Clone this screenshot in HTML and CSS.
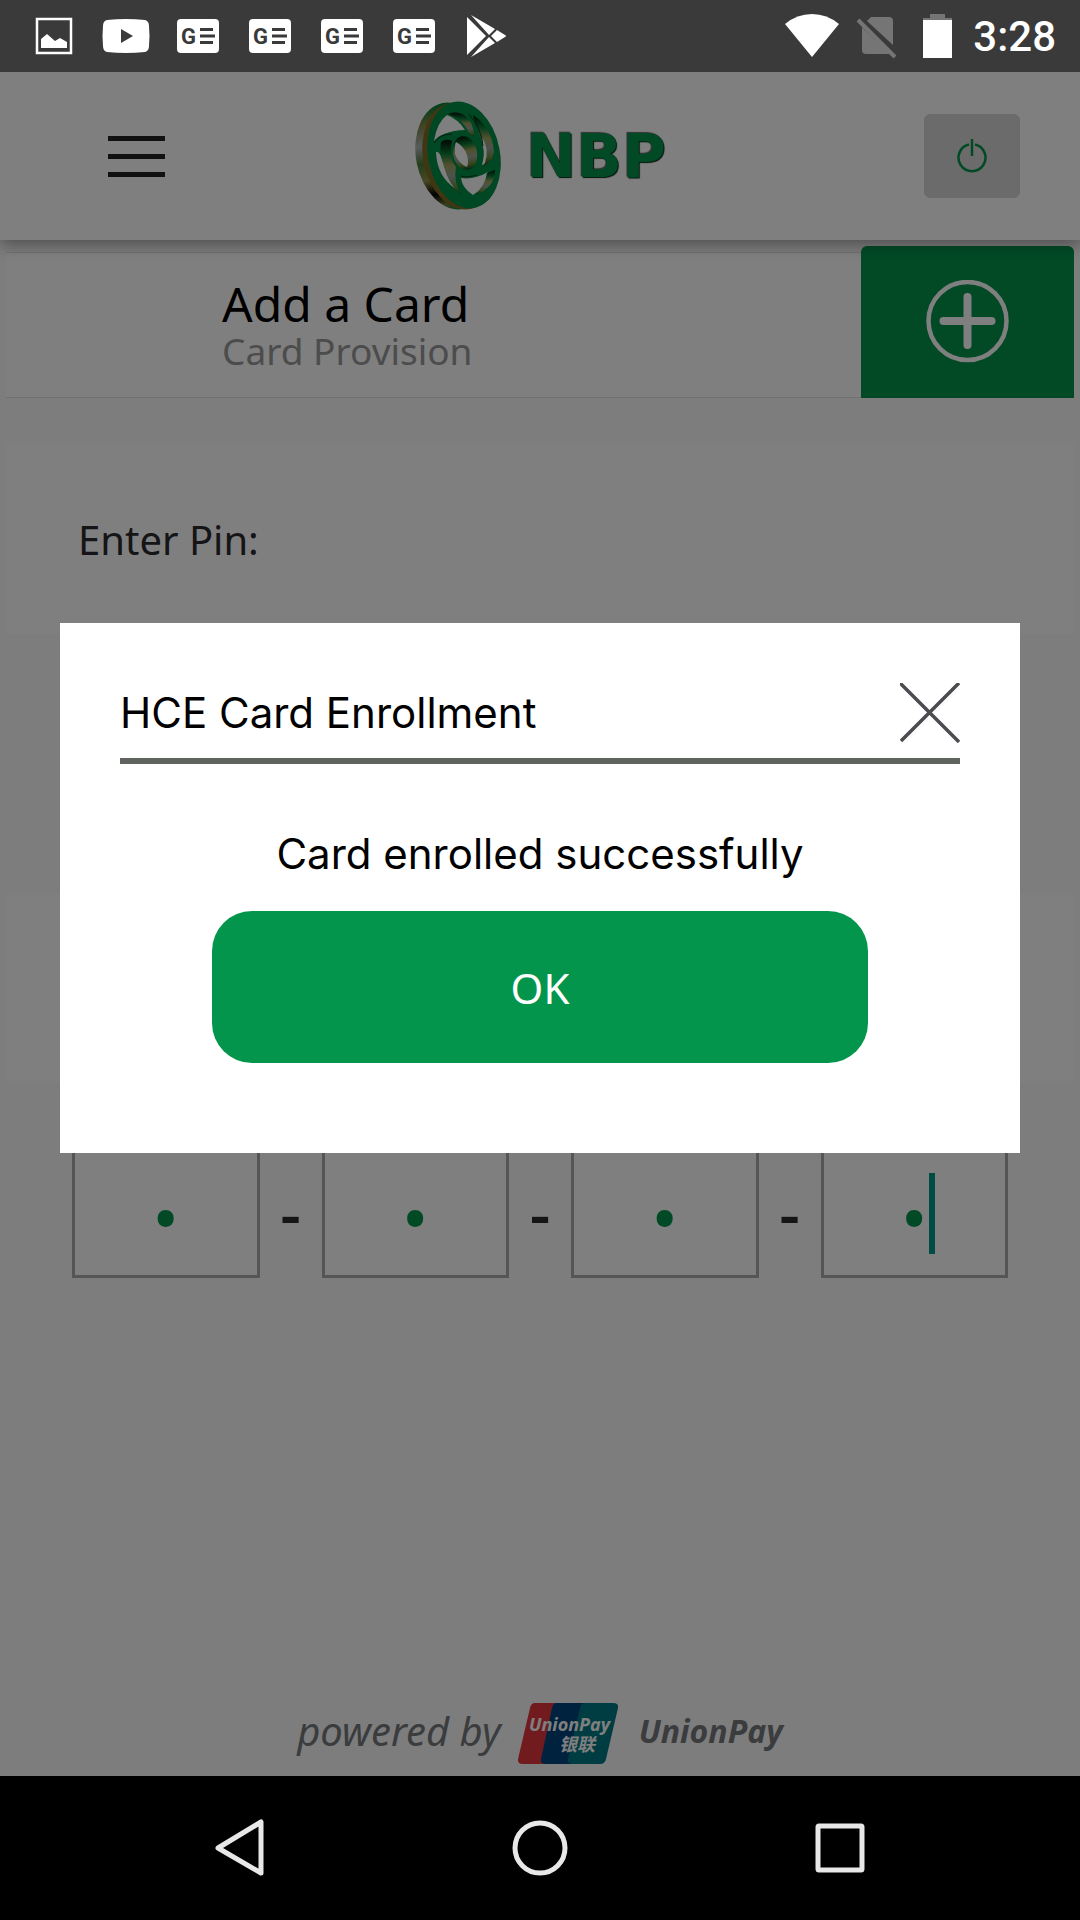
FILE: index.html
```html
<!DOCTYPE html>
<html lang="en">
<head>
  <meta charset="UTF-8">
  <meta name="viewport" content="width=device-width, initial-scale=1.0">
  <title>NBP - Add a Card</title>
  <link rel="stylesheet" href="styles.css">
</head>
<body>
  <div class="screen">
    <div class="statusbar">
      <div class="status-icons">
        <svg width="48" height="48" viewBox="0 0 48 48">
          <path d="M7 7h34v34H7z" fill="none" stroke="#fff" stroke-width="2.5"/>
          <path d="M11 36v-9l6-5 8 7 5-3 7 4v6z" fill="#fff"/>
        </svg>
        <svg width="48" height="48" viewBox="0 0 48 48">
          <path d="M5 8q19-2 38 0 4 1 4 6 1 10 0 20 0 5-4 6-19 2-38 0-4-1-4-6-1-10 0-20 0-5 4-6z" fill="#fff"/>
          <path d="M19 17v14l12-7z" fill="#3a3a3a"/>
        </svg>
        <svg class="news" width="48" height="48" viewBox="0 0 48 48">
          <rect x="3" y="7" width="42" height="34" rx="4" fill="#fff"/>
          <text x="7" y="32">G</text>
          <path d="M26 17.500h13M26 24h15M26 30.500h13" stroke="#3a3a3a" stroke-width="3"/>
        </svg>
        <svg class="news" width="48" height="48" viewBox="0 0 48 48">
          <rect x="3" y="7" width="42" height="34" rx="4" fill="#fff"/>
          <text x="7" y="32">G</text>
          <path d="M26 17.500h13M26 24h15M26 30.500h13" stroke="#3a3a3a" stroke-width="3"/>
        </svg>
        <svg class="news" width="48" height="48" viewBox="0 0 48 48">
          <rect x="3" y="7" width="42" height="34" rx="4" fill="#fff"/>
          <text x="7" y="32">G</text>
          <path d="M26 17.500h13M26 24h15M26 30.500h13" stroke="#3a3a3a" stroke-width="3"/>
        </svg>
        <svg class="news" width="48" height="48" viewBox="0 0 48 48">
          <rect x="3" y="7" width="42" height="34" rx="4" fill="#fff"/>
          <text x="7" y="32">G</text>
          <path d="M26 17.500h13M26 24h15M26 30.500h13" stroke="#3a3a3a" stroke-width="3"/>
        </svg>
        <svg width="48" height="48" viewBox="0 0 48 48">
          <path d="M5 5l19 19L5 43zM9 3l24 14-6 6zM9 45l24-14-6-6zM35 18l8 5q2 1 0 2l-8 5-6-6z" fill="#fff"/>
        </svg>
      </div>
      <div class="status-right">
        <svg width="54" height="48" viewBox="0 0 54 48">
          <path d="M27 45L0 12Q12 2 27 2t27 10z" fill="#fff"/>
        </svg>
        <svg width="48" height="48" viewBox="0 0 48 48">
          <path d="M16 9l4-4h18q4 0 4 4v24zM11 15l28 27H15q-4 0-4-4z" fill="#757575"/>
          <path d="M7 8l37 37" stroke="#757575" stroke-width="4"/>
        </svg>
        <svg width="48" height="48" viewBox="0 0 48 48">
          <path d="M19 2h15v4h7v3H12V6h7z" fill="#757575"/>
          <path d="M12 8h29v38H12z" fill="#fff"/>
        </svg>
        <span class="time">3:28</span>
      </div>
    </div>

    <header class="header">
      <button class="menu-btn" aria-label="Menu"><span></span><span></span><span></span></button>
      <div class="logo">
        <svg width="90" height="112" viewBox="0 0 90 112">
          <defs>
            <linearGradient id="rim" x1="0" y1="0" x2="0" y2="1">
              <stop offset="0" stop-color="#00803c"/>
              <stop offset=".16" stop-color="#808440"/>
              <stop offset=".36" stop-color="#b0b4ba"/>
              <stop offset=".52" stop-color="#4a7c34"/>
              <stop offset=".68" stop-color="#90904a"/>
              <stop offset=".82" stop-color="#000"/>
              <stop offset=".93" stop-color="#70803c"/>
              <stop offset="1" stop-color="#00803c"/>
            </linearGradient>
            <linearGradient id="gold" x1="0" y1="0" x2="0" y2="1">
              <stop offset="0" stop-color="#06110a"/>
              <stop offset=".25" stop-color="#0b7a35"/>
              <stop offset=".45" stop-color="#a2a25e"/>
              <stop offset=".65" stop-color="#9aa59a"/>
              <stop offset=".85" stop-color="#6a8a3a"/>
              <stop offset="1" stop-color="#0a4a20"/>
            </linearGradient>
          </defs>
          <ellipse cx="39" cy="56" rx="37" ry="54" transform="rotate(-11 39 56)" fill="url(#rim)"/>
          <ellipse cx="46" cy="56" rx="37" ry="54" transform="rotate(-11 46 56)" fill="#806f24"/>
          <ellipse cx="50" cy="55" rx="36" ry="54" transform="rotate(-11 50 55)" fill="#009048"/>
          <g fill="#fff">
            <path d="M20 41Q23 22 33 15 44 19 51 30 40 30 30 34 24 36 20 41z"/>
            <path d="M22 52Q26 50 30 66 34 80 42 89 23 77 22 52z"/>
            <path d="M47 78Q60 80 74 72 72 87 59 95 48 88 47 78z"/>
          </g>
          <g fill="url(#gold)">
            <path d="M34 14Q47 9 56 21 60 28 60 37L55 33Q48 18 34 14z"/>
            <path d="M27 42Q33 38 38 41 34 57 42 67 39 82 48 96 34 84 30 66 25 54 27 42z"/>
            <path d="M73 73L81 70Q81 88 61 95 71 86 73 73z"/>
            <path d="M59 15Q78 27 80 52 78 63 69 66 73 52 69 42 62 28 59 15z"/>
            <ellipse cx="51" cy="53" rx="12" ry="17" transform="rotate(-11 51 53)"/>
          </g>
          <path d="M42 42Q50 46 53 55 55 62 53 67 44 63 41 54 40 46 42 42zM67 36q9 12 4 27-1 2-3 2 3-12 1-18z" fill="#fff"/>
          <path d="M55 14Q68 30 69 46M20 43q6-9 18-9M47 76q6 2 16-1" fill="none" stroke="#003a1a" stroke-width="1"/>
        </svg>
        <span class="logo-text">NBP</span>
      </div>
      <button class="power-btn" aria-label="Log out">
        <svg width="32" height="36" viewBox="0 0 32 36">
          <path d="M13 6.500a13.500 13.500 0 1 0 6 0M16 1v17" fill="none" stroke="#04954c" stroke-width="2.500"/>
        </svg>
      </button>
    </header>

    <main class="content">
      <section class="card-row">
        <div class="card-info">
          <h1>Add a Card</h1>
          <p>Card Provision</p>
        </div>
        <button class="add-btn" aria-label="Add">
          <svg width="84" height="84" viewBox="0 0 84 84" fill="none" stroke="#fff">
            <circle cx="41.500" cy="41" r="39" stroke-width="4.500"/>
            <path d="M17.500 41h48M41.500 17v48" stroke-width="8" stroke-linecap="round"/>
          </svg>
        </button>
      </section>

      <div class="panel">Enter Pin:</div>
      <div class="pins">
        <div class="pin"><input type="password" maxlength="1" aria-label="Pin digit 1"></div>
        <div class="pin"><input type="password" maxlength="1" aria-label="Pin digit 2"></div>
        <div class="pin"><input type="password" maxlength="1" aria-label="Pin digit 3"></div>
        <div class="pin"><input type="password" maxlength="1" aria-label="Pin digit 4"></div>
      </div>

      <div class="panel"></div>
      <div class="pins">
        <div class="pin"><input type="password" maxlength="1" value="1" aria-label="Confirm digit 1"></div>
        <span class="dash">-</span>
        <div class="pin"><input type="password" maxlength="1" value="1" aria-label="Confirm digit 2"></div>
        <span class="dash">-</span>
        <div class="pin"><input type="password" maxlength="1" value="1" aria-label="Confirm digit 3"></div>
        <span class="dash">-</span>
        <div class="pin">
          <input type="password" maxlength="1" value="1" aria-label="Confirm digit 4">
          <span class="caret"></span>
        </div>
      </div>
    </main>

    <footer class="footer">
      <span class="powered">powered by</span>
      <svg width="114" height="68" viewBox="0 0 114 68">
        <path d="M21 2h87q5 0 4 5L99 61q-1 5-6 5H6q-5 0-4-5L15 7q1-5 6-5z" fill="#fff" opacity=".25"/>
        <path d="M22 4h30L36 65H10q-6 0-5-5L17 9q1-5 5-5z" fill="#e2373f"/>
        <path d="M44 4h40L70 65H33q-6 0-5-5L39 9q1-5 5-5z" fill="#00447c"/>
        <path d="M72 4h28q6 0 5 5L93 60q-1 5-6 5H60q-6 0-5-5L67 9q1-5 5-5z" fill="#007b84"/>
        <text x="16" y="32" class="card-name">UnionPay</text>
        <text x="46" y="52" class="card-cn">银联</text>
      </svg>
      <span class="union">UnionPay</span>
    </footer>

    <div class="overlay">
      <div class="modal" role="dialog" aria-labelledby="modalTitle">
        <div class="modal-head">
          <h2 id="modalTitle">HCE Card Enrollment</h2>
          <button class="close-btn" aria-label="Close">
            <svg width="60" height="60" viewBox="0 0 60 60">
              <path d="M0 0l59 59M59 0L1 58" stroke="#4b4b50" stroke-width="3.500"/>
            </svg>
          </button>
        </div>
        <p class="message">Card enrolled successfully</p>
        <button class="ok-btn">OK</button>
      </div>
    </div>
  </div>

  <nav class="navbar">
    <button aria-label="Back">
      <svg width="60" height="60" viewBox="0 0 60 60"><path d="M51 4v51L8 30z"/></svg>
    </button>
    <button aria-label="Home">
      <svg width="60" height="60" viewBox="0 0 60 60"><circle cx="30" cy="30" r="25"/></svg>
    </button>
    <button aria-label="Recent apps">
      <svg width="60" height="60" viewBox="0 0 60 60"><rect x="8" y="8" width="44" height="44" rx="1"/></svg>
    </button>
  </nav>
</body>
</html>
```

FILE: styles.css
```css
* {
  box-sizing: border-box;
}

body {
  margin: 0;
  min-height: 100vh;
  display: flex;
  flex-direction: column;
  font-family: 'Noto Sans', 'Open Sans', sans-serif;
  background-color: #000;
  color: #000;
}

h1, h2, p {
  margin: 0;
  font-weight: normal;
}

button {
  border: none;
  padding: 0;
  background: none;
  font-family: inherit;
  cursor: pointer;
}

svg {
  display: block;
}

.screen {
  position: relative;
  flex: 1;
  display: flex;
  flex-direction: column;
  background-color: #fafafa;
}

/* status bar */
.statusbar {
  position: relative;
  z-index: 2;
  height: 72px;
  padding: 0 24px 0 30px;
  display: flex;
  justify-content: space-between;
  align-items: center;
  background-color: #3a3a3a;
  color: white;
}

.status-icons {
  display: flex;
  gap: 24px;
}

.status-right {
  display: flex;
  align-items: center;
  gap: 12px;
}

.news text {
  font: bold 22px Roboto, sans-serif;
  fill: #3a3a3a;
}

.time {
  padding-left: 2px;
  font: 500 42px Roboto, sans-serif;
}

/* header */
.header {
  position: relative;
  height: 168px;
  padding: 0 60px;
  display: grid;
  grid-template-columns: 1fr auto 1fr;
  align-items: center;
  background-color: white;
  box-shadow: 0 4px 16px rgba(0, 0, 0, 0.4);
}

.menu-btn {
  width: 57px;
  margin-left: 48px;
  display: flex;
  flex-direction: column;
  gap: 13px;
}

.menu-btn span {
  height: 5px;
  background-color: #222;
}

.logo {
  display: flex;
  align-items: center;
  gap: 22px;
}

.logo-text {
  font: bold 60px 'DejaVu Sans', sans-serif;
  color: #04954c;
  text-shadow: 1px 1px 1px #002a12, -1px -1px 1px #666;
}

.power-btn {
  justify-self: end;
  width: 96px;
  height: 84px;
  display: flex;
  justify-content: center;
  align-items: center;
  border-radius: 6px;
  background-color: #d6d6d6;
}

/* content */
.content {
  padding: 6px 6px 0;
}

.card-row {
  display: flex;
  align-items: flex-end;
  margin-bottom: 46px;
}

.card-info {
  flex: 1;
  height: 146px;
  padding-left: 216px;
  display: flex;
  flex-direction: column;
  justify-content: center;
  align-items: flex-start;
  background-color: white;
  border-top: 1px solid #e2e2e2;
  border-bottom: 1px solid #e2e2e2;
}

.card-info h1 {
  font-size: 48px;
  line-height: 52px;
}

.card-info p {
  font-size: 37px;
  line-height: 42px;
  color: #999;
}

.add-btn {
  width: 213px;
  height: 152px;
  display: flex;
  justify-content: center;
  align-items: center;
  border-radius: 6px 6px 0 0;
  background-color: #04954c;
}

.panel {
  height: 190px;
  padding: 0 72px;
  display: flex;
  align-items: center;
  background-color: white;
  font-size: 40px;
  color: #2a2a30;
}

.pins {
  display: flex;
  align-items: center;
  padding: 65px 66px 64px;
}

.pin {
  position: relative;
  flex: 1;
}

.pin input {
  display: block;
  width: 100%;
  height: 130px;
  padding: 16px 0 0;
  border: 3px solid #aaa;
  border-radius: 0;
  outline: none;
  background-color: white;
  color: #04954c;
  font: 80px Roboto, sans-serif;
  text-align: center;
}

.dash {
  width: 62px;
  text-align: center;
  font: 600 64px/80px 'Open Sans', sans-serif;
  color: #2a2a2a;
}

.caret {
  position: absolute;
  top: 25px;
  left: 58%;
  width: 6px;
  height: 81px;
  background-color: #009688;
}

/* footer */
.footer {
  margin-top: auto;
  height: 86px;
  display: flex;
  justify-content: center;
  align-items: center;
  gap: 12px;
  color: #77787c;
}

.powered,
.union {
  padding-bottom: 6px;
}

.powered {
  font-size: 40px;
  font-style: italic;
}

.union {
  font: italic bold 32px 'Open Sans', sans-serif;
}

.card-name {
  font: italic bold 18px 'Open Sans', sans-serif;
  fill: white;
}

.card-cn {
  font: italic bold 18px 'Noto Sans CJK SC', sans-serif;
  fill: white;
}

/* dialog */
.overlay {
  position: absolute;
  top: 0;
  right: 0;
  bottom: 0;
  left: 0;
  display: flex;
  align-items: center;
  padding: 0 60px;
  background-color: rgba(0, 0, 0, 0.5);
}

.modal {
  flex: 1;
  padding: 60px 60px 90px;
  display: flex;
  flex-direction: column;
  background-color: white;
  font-family: Inter, Roboto, sans-serif;
}

.modal-head {
  display: flex;
  justify-content: space-between;
  align-items: center;
  padding-bottom: 15px;
  border-bottom: 6px solid #5f645f;
}

.modal-head h2,
.message {
  font-size: 42px;
  line-height: 60px;
}

.message {
  margin: 60px 0 27px;
  text-align: center;
}

.ok-btn {
  align-self: center;
  width: 78%;
  height: 152px;
  border-radius: 40px;
  background-color: #04954c;
  color: white;
  font: 42px 'Noto Sans', sans-serif;
}

/* navigation bar */
.navbar {
  height: 144px;
  display: flex;
  justify-content: center;
  align-items: center;
  gap: 240px;
}

.navbar svg {
  fill: none;
  stroke: #e8e8e8;
  stroke-width: 5;
  stroke-linejoin: round;
}
```
